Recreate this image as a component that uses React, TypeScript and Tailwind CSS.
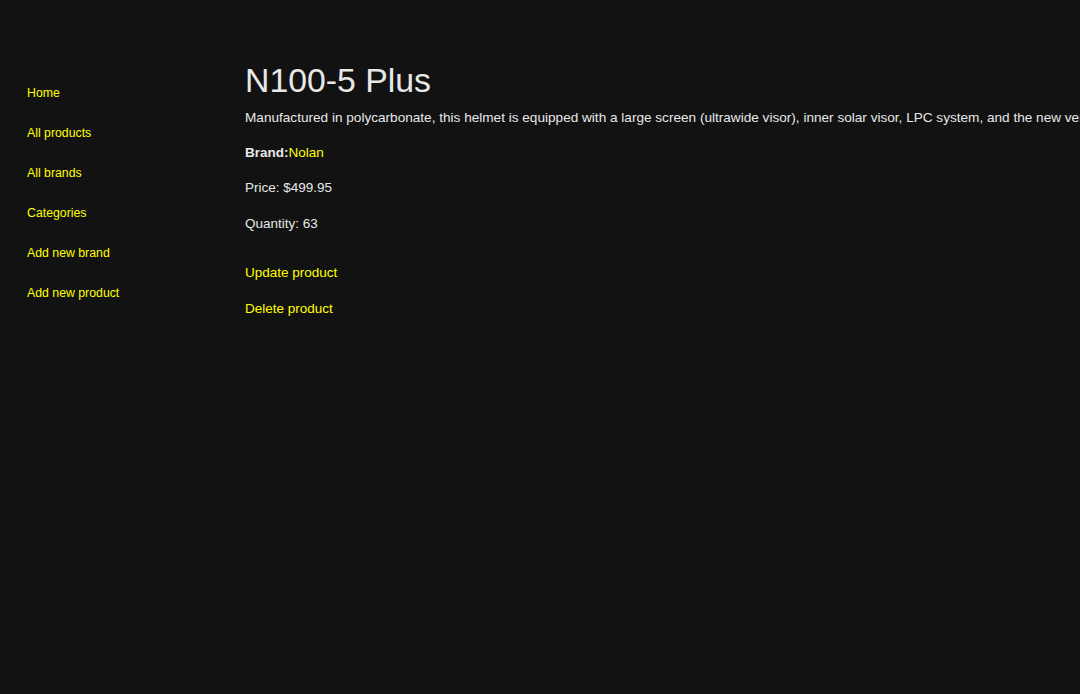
export default function App() {
  const nav = ["Home", "All products", "All brands", "Categories", "Add new brand", "Add new product"];
  return (
    <div className="flex min-h-[694px] w-full overflow-hidden bg-[#121212] text-[#e8e8e8]" style={{ fontFamily: '"Liberation Sans", Arial, sans-serif' }}>
      <nav className="w-[245px] shrink-0 pl-[27px] pt-[73px]">
        <ul className="flex flex-col">
          {nav.map((n) => (
            <li key={n} className="h-10 leading-10 text-[12.3px]">
              <a href="#" className="text-[#ffff00]">{n}</a>
            </li>
          ))}
        </ul>
      </nav>
      <main className="min-w-0 flex-1 overflow-hidden pt-[63px]">
        <h1 className="h-[34px] text-[33.8px] leading-[34px] whitespace-nowrap">N100-5 Plus</h1>
        <p className="mt-[11px] h-5 text-[13.6px] leading-5 whitespace-nowrap">
          Manufactured in polycarbonate, this helmet is equipped with a large screen (ultrawide visor), inner solar visor, LPC system, and the new version of the N-Com communication system.
        </p>
        <p className="mt-[15px] h-5 text-[13.5px] leading-5">
          <span className="font-bold">Brand:</span>
          <a href="#" className="text-[#ffff00]">Nolan</a>
        </p>
        <p className="mt-[15px] h-5 text-[13.5px] leading-5">Price: $499.95</p>
        <p className="mt-4 h-5 text-[13.5px] leading-5">Quantity: 63</p>
        <div className="mt-[29px] flex flex-col gap-4">
          <a href="#" className="block h-5 text-[13.5px] leading-5 text-[#ffff00]">Update product</a>
          <a href="#" className="block h-5 text-[13.5px] leading-5 text-[#ffff00]">Delete product</a>
        </div>
      </main>
    </div>
  );
}
